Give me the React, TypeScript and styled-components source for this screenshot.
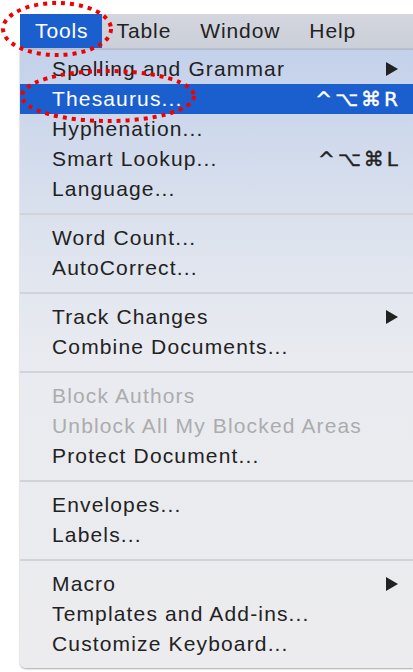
import React from 'react';
import styled, {createGlobalStyle} from 'styled-components';

type Entry =
  | {kind: 'item'; label: string; shortcut?: string; submenu?: boolean; active?: boolean; disabled?: boolean}
  | {kind: 'sep'};

const ENTRIES: Entry[] = [
  {kind: 'item', label: 'Spelling and Grammar', submenu: true},
  {kind: 'item', label: 'Thesaurus...', shortcut: '^⌥⌘R', active: true},
  {kind: 'item', label: 'Hyphenation...'},
  {kind: 'item', label: 'Smart Lookup...', shortcut: '^⌥⌘L'},
  {kind: 'item', label: 'Language...'},
  {kind: 'sep'},
  {kind: 'item', label: 'Word Count...'},
  {kind: 'item', label: 'AutoCorrect...'},
  {kind: 'sep'},
  {kind: 'item', label: 'Track Changes', submenu: true},
  {kind: 'item', label: 'Combine Documents...'},
  {kind: 'sep'},
  {kind: 'item', label: 'Block Authors', disabled: true},
  {kind: 'item', label: 'Unblock All My Blocked Areas', disabled: true},
  {kind: 'item', label: 'Protect Document...'},
  {kind: 'sep'},
  {kind: 'item', label: 'Envelopes...'},
  {kind: 'item', label: 'Labels...'},
  {kind: 'sep'},
  {kind: 'item', label: 'Macro', submenu: true},
  {kind: 'item', label: 'Templates and Add-ins...'},
  {kind: 'item', label: 'Customize Keyboard...'},
];

const TITLES = ['Tools', 'Table', 'Window', 'Help'];

const Arrow: React.FC = () => (
  <ArrowSvg viewBox="0 0 12 14" width={12} height={14}>
    <path d="M0 0 L12 7 L0 14 Z" fill="currentColor" />
  </ArrowSvg>
);

export default function App() {
  return (
    <>
      <GlobalStyle />
      <Page>
        <MenuBar>
          {TITLES.map((t, i) => (
            <MenuTitle key={t} $active={i === 0}>
              {t}
            </MenuTitle>
          ))}
        </MenuBar>
        <Dropdown>
          {ENTRIES.map((e, i) =>
            e.kind === 'sep' ? (
              <Separator key={i} />
            ) : (
              <Item key={i} $active={e.active} $disabled={e.disabled}>
                <Label>{e.label}</Label>
                {e.shortcut && <Shortcut>{e.shortcut}</Shortcut>}
                {e.submenu && <Arrow />}
              </Item>
            )
          )}
        </Dropdown>
        <Marks viewBox="0 0 413 672" width={413} height={672}>
          <ellipse cx={57} cy={29} rx={54} ry={26} />
          <ellipse cx={108} cy={96} rx={86} ry={25} />
        </Marks>
      </Page>
    </>
  );
}

const GlobalStyle = createGlobalStyle`
  html, body {
    margin: 0;
    padding: 0;
    background: #fff;
  }
  body {
    font-family: "Liberation Sans", Arial, sans-serif;
  }
`;

const Page = styled.div`
  position: relative;
  width: 413px;
  height: 672px;
  padding: 14px 0 0 20px;
  box-sizing: border-box;
  overflow: hidden;
`;

const MenuBar = styled.div`
  display: flex;
  height: 34px;
  background: linear-gradient(#d3d6de, #cbcfd8);
  border-bottom: 2px solid #b9c1d0;
`;

const MenuTitle = styled.div<{$active?: boolean}>`
  display: flex;
  align-items: center;
  padding: 0 14px 0 15px;
  font-size: 21px;
  letter-spacing: 0.9px;
  color: ${p => (p.$active ? '#fff' : '#222')};
  background: ${p => (p.$active ? '#1b5fcf' : 'transparent')};

  &:first-child {
    padding-right: 13px;
  }
`;

const Dropdown = styled.div`
  display: flex;
  flex-direction: column;
  padding: 4px 0 9px;
  background: linear-gradient(#c3d1ea 0%, #dde3ee 30%, #e9ebf0 50%, #ececee 100%);
  border-bottom-left-radius: 6px;
  box-shadow: 0 1px 2px rgba(0, 0, 0, 0.35);
`;

const Item = styled.div<{$active?: boolean; $disabled?: boolean}>`
  display: flex;
  align-items: center;
  height: 30px;
  padding: 0 15px 0 32px;
  font-size: 21px;
  letter-spacing: 1.15px;
  color: ${p => (p.$active ? '#fff' : p.$disabled ? '#acacae' : '#222')};
  background: ${p => (p.$active ? '#1b5fcf' : 'transparent')};
`;

const Label = styled.span`
  flex: 1;
  white-space: nowrap;
`;

const Shortcut = styled.span`
  font-family: "DejaVu Sans", sans-serif;
  font-size: 20px;
  letter-spacing: 3px;
  margin-right: -3px;
  -webkit-text-stroke: 0.4px currentColor;
`;

const ArrowSvg = styled.svg`
  flex-shrink: 0;
`;

const Separator = styled.div`
  height: 19px;
  display: flex;
  align-items: center;
  &::after {
    content: '';
    flex: 1;
    height: 2px;
    margin-top: 1px;
    background: #d2d3d8;
  }
`;

const Marks = styled.svg`
  position: absolute;
  left: 0;
  top: 0;
  pointer-events: none;
  fill: none;
  stroke: #f00000;
  stroke-width: 4;
  stroke-dasharray: 4 5;
`;
